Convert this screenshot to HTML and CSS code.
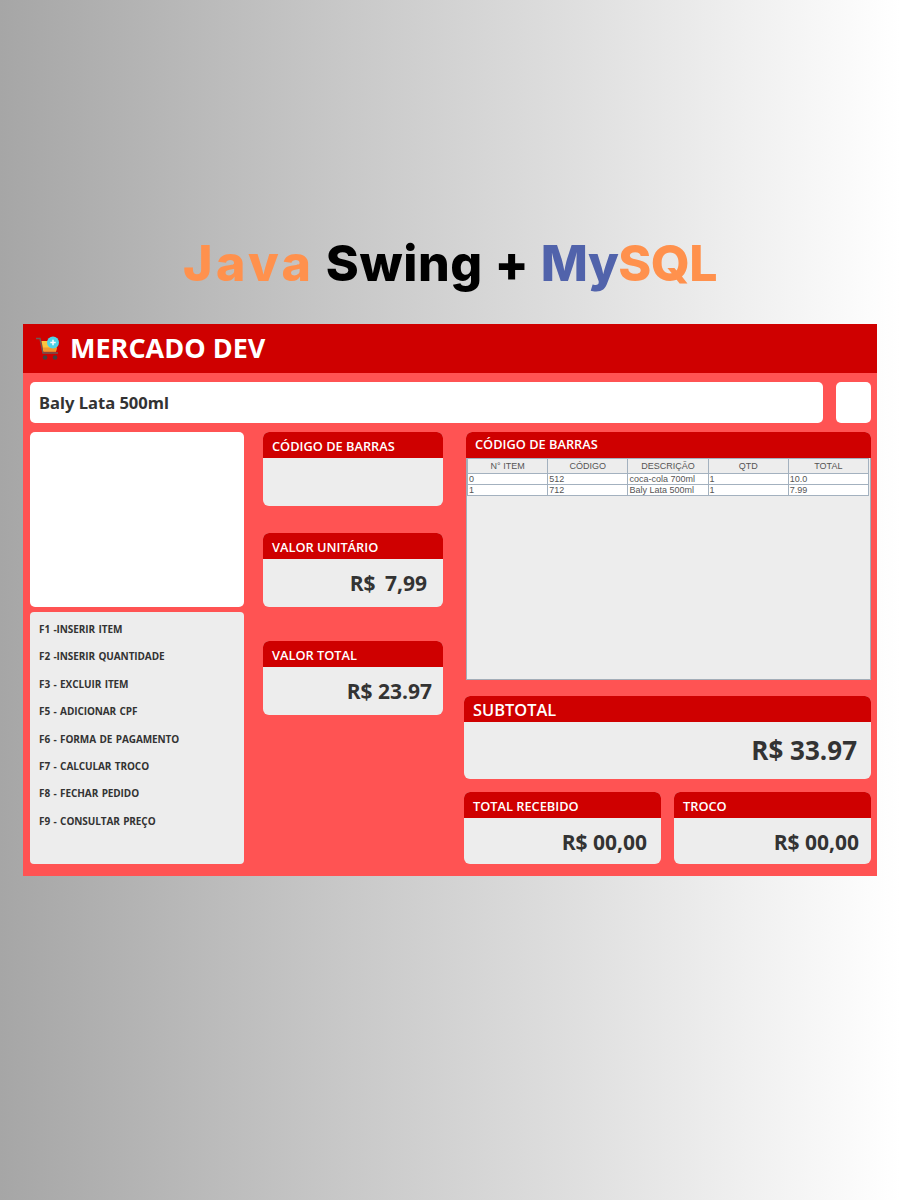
FILE: index.html
```html
<!DOCTYPE html>
<html>
  <head>
    <meta charset="utf-8">
    <title>Mercado Dev</title>
    <link rel="stylesheet" href="styles.css">
  </head>
  <body>
    <h1 class="headline"><span class="orange java">Java</span> Swing + <span class="mysql"><span class="blue">My</span><span class="orange">SQL</span></span></h1>
    <div class="frame">
      <div class="topbar">
        <svg class="cart" viewBox="0 0 26 26" width="26" height="26">
          <path d="M1 2.500h4l3 14.500h15" fill="none" stroke="#6b5a55" stroke-width="1.400"/>
          <path d="M6.500 5h16l-1.500 10.500H8.500z" fill="#fbc63f"/>
          <path d="M8 11.500h14l-1 4H8.500z" fill="#f29a2e"/>
          <circle cx="10" cy="21.500" r="2.300" fill="#45403f"/>
          <circle cx="20" cy="21.500" r="2.300" fill="#45403f"/>
          <circle cx="18" cy="6.500" r="6" fill="#4fd3e6"/>
          <path d="M18 3.800v5.400M15.300 6.500h5.400" stroke="#fff" stroke-width="1.500"/>
        </svg>
        <span class="brand">MERCADO DEV</span>
      </div>
      <div class="content">
        <div class="searchrow">
          <div class="search">Baly Lata 500ml</div>
          <div class="searchbtn"></div>
        </div>
        <div class="columns">
          <div class="col-left">
            <div class="photo"></div>
            <div class="keys">
              <p>F1 -INSERIR ITEM</p>
              <p>F2 -INSERIR QUANTIDADE</p>
              <p>F3 - EXCLUIR ITEM</p>
              <p>F5 - ADICIONAR CPF</p>
              <p>F6 - FORMA DE PAGAMENTO</p>
              <p>F7 - CALCULAR TROCO</p>
              <p>F8 - FECHAR PEDIDO</p>
              <p>F9 - CONSULTAR PREÇO</p>
            </div>
          </div>
          <div class="col-mid">
            <div class="card small">
              <div class="card-head">CÓDIGO DE BARRAS</div>
              <div class="card-body"></div>
            </div>
            <div class="card small gap-27">
              <div class="card-head">VALOR UNITÁRIO</div>
              <div class="card-body"><span class="price wide">R$ 7,99</span></div>
            </div>
            <div class="card small gap-34">
              <div class="card-head">VALOR TOTAL</div>
              <div class="card-body"><span class="price">R$ 23.97</span></div>
            </div>
          </div>
          <div class="col-right">
            <div class="card items">
              <div class="card-head">CÓDIGO DE BARRAS</div>
              <div class="table-wrap">
                <table>
                  <thead>
                    <tr><th>N° ITEM</th><th>CÓDIGO</th><th>DESCRIÇÃO</th><th>QTD</th><th>TOTAL</th></tr>
                  </thead>
                  <tbody>
                    <tr><td>0</td><td>512</td><td>coca-cola 700ml</td><td>1</td><td>10.0</td></tr>
                    <tr><td>1</td><td>712</td><td>Baly Lata 500ml</td><td>1</td><td>7.99</td></tr>
                  </tbody>
                </table>
              </div>
            </div>
            <div class="card subtotal">
              <div class="card-head">SUBTOTAL</div>
              <div class="card-body"><span class="price">R$ 33.97</span></div>
            </div>
            <div class="pair">
              <div class="card received">
                <div class="card-head">TOTAL RECEBIDO</div>
                <div class="card-body"><span class="price">R$ 00,00</span></div>
              </div>
              <div class="card">
                <div class="card-head">TROCO</div>
                <div class="card-body"><span class="price">R$ 00,00</span></div>
              </div>
            </div>
          </div>
        </div>
      </div>
    </div>
  </body>
</html>
```

FILE: styles.css
```css
html, body {
  margin: 0;
  height: 1200px;
}
body {
  background: linear-gradient(90deg, #a6a6a6 0%, #ffffff 100%);
  font-family: "Open Sans", sans-serif;
  overflow: hidden;
}
.headline {
  margin: 0;
  height: 324px;
  padding-top: 227px;
  box-sizing: border-box;
  text-align: center;
  font-family: Inter, sans-serif;
  font-weight: 800;
  font-size: 50px;
  letter-spacing: 0.6px;
  line-height: 72px;
  color: #000;
}
.orange { color: #ff914d; }
.blue { color: #5163ab; }
.java { letter-spacing: 3.4px; }
.mysql { letter-spacing: -0.6px; }

.frame {
  margin: 0 23px;
  height: 552px;
  background-color: #ff5353;
}
.topbar {
  height: 49px;
  background-color: #cf0000;
  display: flex;
  align-items: center;
  padding-left: 12px;
  gap: 10px;
}
.brand {
  font-family: "Open Sans", sans-serif;
  font-weight: 700;
  font-size: 27px;
  margin: 0 0 2px -1px;
  color: #fff;
}
.content {
  padding: 9px 6px 0 7px;
}
.searchrow {
  display: flex;
  gap: 13px;
}
.search {
  flex: 1;
  height: 41px;
  line-height: 41px;
  padding-left: 9px;
  background-color: #fff;
  border-radius: 5px;
  font-family: "Noto Sans", sans-serif;
  font-weight: 700;
  font-size: 16.6px;
  color: #333;
}
.searchbtn {
  width: 35px;
  height: 41px;
  background-color: #fff;
  border-radius: 5px;
}
.columns {
  display: grid;
  grid-template-columns: 214px 180px 409px;
  column-gap: 19px;
  margin-top: 9px;
  height: 432px;
}
.col-left {
  display: flex;
  flex-direction: column;
  gap: 5px;
}
.photo {
  height: 175px;
  background-color: #fff;
  border-radius: 5px;
}
.keys {
  flex: 1;
  background-color: #ededed;
  border-radius: 4px;
  padding: 10px 9px;
}
.keys p {
  margin: 0 0 11px;
  height: 16.4px;
  line-height: 14px;
  font-size: 10px;
  letter-spacing: -0.1px;
  word-spacing: 1px;
  font-weight: 700;
  color: #333;
}
.col-mid {
  display: flex;
  flex-direction: column;
}
.col-right {
  margin-left: 2px;
  display: flex;
  flex-direction: column;
}
.card {
  border-radius: 6px;
  overflow: hidden;
  background-color: #ededed;
  display: flex;
  flex-direction: column;
}
.card-head {
  height: 26px;
  line-height: 28px;
  padding-left: 9px;
  background-color: #cf0000;
  color: #fff;
  font-size: 12.8px;
  font-weight: 600;
  flex: none;
}
.card-body {
  flex: 1;
  display: flex;
  align-items: center;
  justify-content: flex-end;
  padding-right: 11px;
}
.price {
  font-size: 21px;
  font-weight: 700;
  color: #333;
}
.small { height: 74px; }
.gap-27 { margin-top: 27px; }
.gap-34 { margin-top: 34px; }
.price.wide {
  word-spacing: 4px;
  padding-right: 5px;
}
.items {
  height: 248px;
  margin-left: 2px;
  border-radius: 6px 6px 0 0;
}
.items .card-head {
  line-height: 24px;
}
.table-wrap {
  flex: 1;
  border: 1px solid #a3adb8;
  border-top: 0;
  background-color: #ededed;
}
table {
  width: 402px;
  table-layout: fixed;
  border-collapse: collapse;
  font-family: "Liberation Sans", sans-serif;
  font-size: 9px;
  color: #555;
}
th, td {
  border: 1px solid #a3b1bf;
  padding: 0 1px;
  font-weight: 400;
  overflow: hidden;
  white-space: nowrap;
}
th {
  height: 14px;
  text-align: center;
  background-color: #ededed;
}
td {
  height: 10px;
  line-height: 10px;
  background-color: #fff;
}
.subtotal {
  margin-top: 16px;
  height: 83px;
}
.subtotal .card-head {
  font-size: 16.4px;
}
.subtotal .card-body {
  padding: 0 14px 2px 0;
}
.subtotal .price {
  font-size: 26px;
}
.pair {
  margin-top: 13px;
  display: grid;
  grid-template-columns: 197px 197px;
  column-gap: 13px;
}
.pair .card {
  height: 72px;
}
.pair .card-body {
  padding: 1px 12px 0 0;
}
.pair .received .card-body {
  padding-right: 14px;
}
```
